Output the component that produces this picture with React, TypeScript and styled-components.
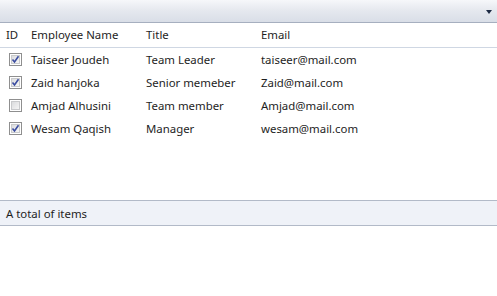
import React from 'react';
import styled, { createGlobalStyle } from 'styled-components';

interface Employee {
	id: number;
	name: string;
	title: string;
	email: string;
	active: boolean;
}

const employees: Employee[] = [
	{ id: 1, name: 'Taiseer Joudeh', title: 'Team Leader', email: 'taiseer@mail.com', active: true },
	{ id: 2, name: 'Zaid hanjoka', title: 'Senior memeber', email: 'Zaid@mail.com', active: true },
	{ id: 3, name: 'Amjad Alhusini', title: 'Team member', email: 'Amjad@mail.com', active: false },
	{ id: 4, name: 'Wesam Qaqish', title: 'Manager', email: 'wesam@mail.com', active: true },
];

const GlobalStyle = createGlobalStyle`
	html, body {
		margin: 0;
		padding: 0;
		background: #ffffff;
	}
	body {
		font-family: 'Noto Sans', 'Open Sans', sans-serif;
		font-size: 11.4px;
		color: #1e1e1e;
	}
`;

function CheckBox({ checked }: { checked: boolean }) {
	return (
		<svg width="13" height="13" viewBox="0 0 13 13">
			<defs>
				<linearGradient id="cbFill" x1="0" y1="0" x2="1" y2="1">
					<stop offset="0" stopColor="#d9dadc" />
					<stop offset="1" stopColor="#f7f7f7" />
				</linearGradient>
			</defs>
			<rect x="0.5" y="0.5" width="12" height="12" fill="#ffffff" stroke="#8f8f8f" />
			<rect x="2.5" y="2.5" width="8" height="8" fill="url(#cbFill)" stroke="#c9cacc" />
			{checked && (
				<path d="M3.5 6.5 L5.5 9 L9.5 3.2" fill="none" stroke="#3a4ca0" strokeWidth="1.6" />
			)}
		</svg>
	);
}

export default function App() {
	return (
		<>
			<GlobalStyle />
			<StyledPanel>
				<Toolbar>
					<DropArrow />
				</Toolbar>

				<HeaderRow>
					<Cell>ID</Cell>
					<Cell>Employee Name</Cell>
					<Cell>Title</Cell>
					<Cell>Email</Cell>
				</HeaderRow>

				<Body>
					{employees.map((employee) => (
						<Row key={employee.id}>
							<Cell>
								<CheckBox checked={employee.active} />
							</Cell>
							<Cell>{employee.name}</Cell>
							<Cell>{employee.title}</Cell>
							<Cell>{employee.email}</Cell>
						</Row>
					))}
				</Body>

				<Footer>A total of items</Footer>
			</StyledPanel>
		</>
	);
}

const StyledPanel = styled.div`
	width: 497px;
	height: 296px;
	display: flex;
	flex-direction: column;
	background: #ffffff;
`;

const Toolbar = styled.div`
	height: 22px;
	flex-shrink: 0;
	display: flex;
	justify-content: flex-end;
	align-items: center;
	padding-right: 5px;
	background: linear-gradient(to bottom, #f6f7fa 0%, #e6e9ef 45%, #d9dee7 100%);
	border-bottom: 1px solid #a6afbf;
`;

const DropArrow = styled.span`
	width: 0;
	height: 0;
	margin-top: 2px;
	border-left: 3.5px solid transparent;
	border-right: 3.5px solid transparent;
	border-top: 4px solid #1d2a44;
`;

const Columns = styled.div`
	display: grid;
	grid-template-columns: 25px 115px 115px 1fr;
	align-items: center;
	padding-left: 6px;
`;

const HeaderRow = styled(Columns)`
	height: 24px;
	flex-shrink: 0;
	border-bottom: 1px solid #cfd7e3;
`;

const Body = styled.div`
	height: 152px;
	flex-shrink: 0;
`;

const Row = styled(Columns)`
	height: 23px;

	svg {
		display: block;
		margin-left: 3px;
	}
`;

const Cell = styled.div`
	white-space: nowrap;
	line-height: 15px;
	padding-bottom: 1px;
`;

const Footer = styled.div`
	height: 24px;
	flex-shrink: 0;
	display: flex;
	align-items: center;
	padding-left: 6px;
	background: #eff2f8;
	border-top: 1px solid #b2bac8;
	border-bottom: 1px solid #b2bac8;
`;
